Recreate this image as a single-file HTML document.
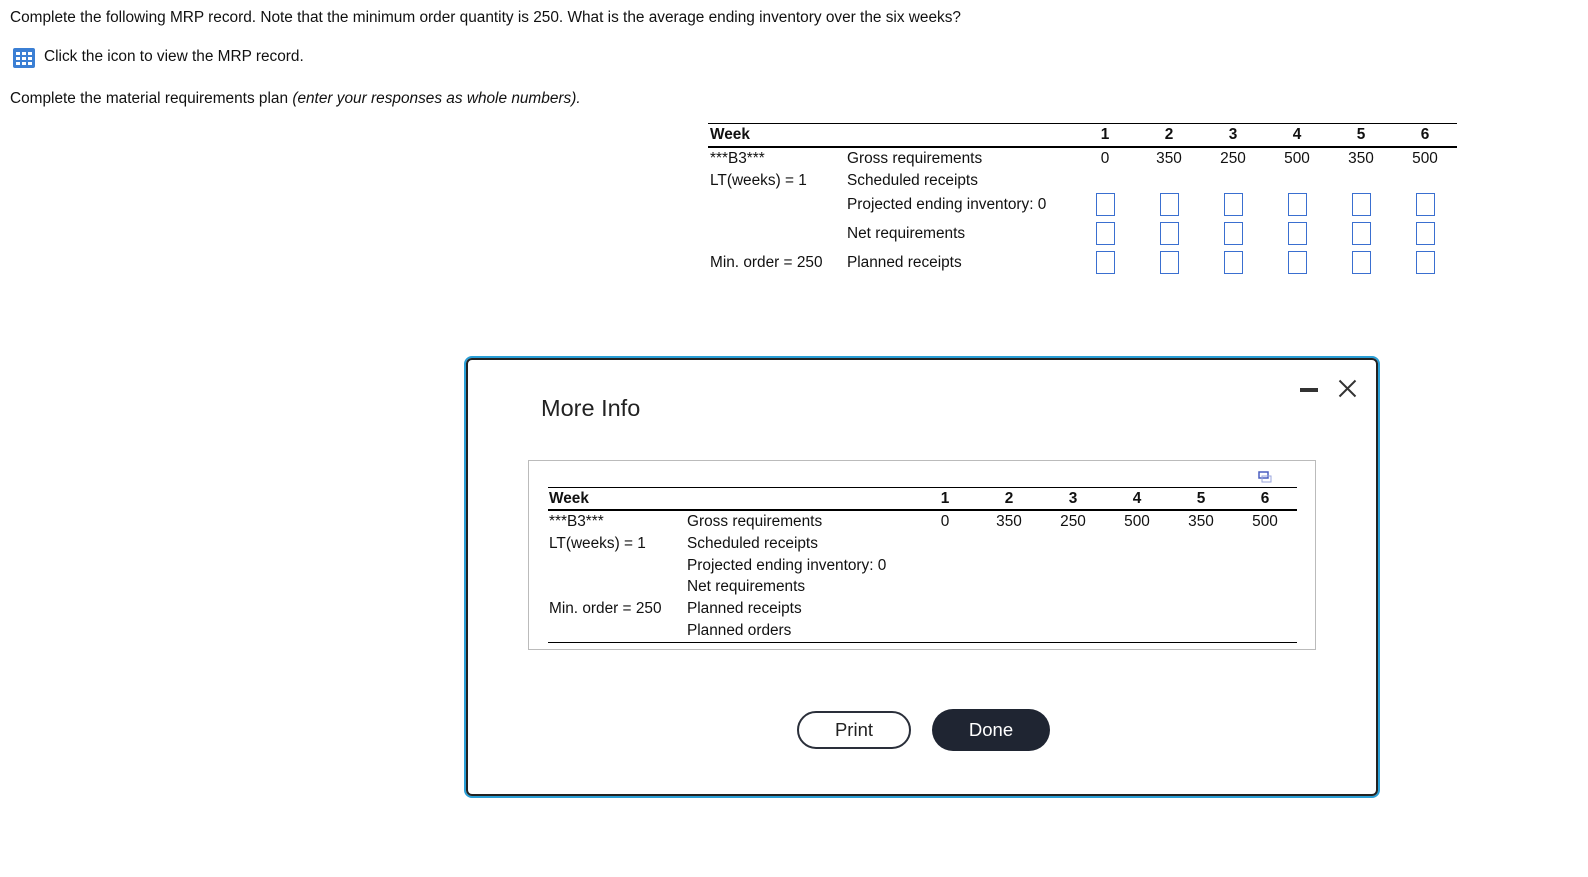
<!DOCTYPE html>
<html><head><style>
body{margin:0;width:1588px;height:877px;background:#fff;font-family:"Liberation Sans",Arial,sans-serif;color:#111;position:relative;overflow:hidden}
.a{position:absolute;white-space:nowrap;line-height:18px}
.t{font-size:15.4px}
.c{text-align:center;width:40px;margin-left:-20px}
.b{font-weight:bold}
.box{position:absolute;width:17px;height:21px;border:1.5px solid #3a6fd0}
.ln{position:absolute;background:#000}
</style></head><body>
<div class="a t" style="left:10px;top:9px">Complete the following MRP record. Note that the minimum order quantity is 250. What is the average ending inventory over the six weeks?</div>
<svg class="a" style="left:13px;top:48px" width="22" height="20" viewBox="0 0 22 20"><rect x="0" y="0" width="22" height="20" rx="2" fill="#3b7fd4"/><g fill="#fff"><rect x="3" y="4" width="4" height="3"/><rect x="9" y="4" width="4" height="3"/><rect x="15" y="4" width="4" height="3"/><rect x="3" y="9" width="4" height="3"/><rect x="9" y="9" width="4" height="3"/><rect x="15" y="9" width="4" height="3"/><rect x="3" y="14" width="4" height="3"/><rect x="9" y="14" width="4" height="3"/><rect x="15" y="14" width="4" height="3"/></g></svg>
<div class="a t" style="left:44px;top:48px">Click the icon to view the MRP record.</div>
<div class="a t" style="left:10px;top:90px">Complete the material requirements plan <i>(enter your responses as whole numbers).</i></div>

<div class="ln" style="left:708px;top:123px;width:749px;height:1px"></div>
<div class="ln" style="left:708px;top:146px;width:749px;height:2px"></div>
<div class="a t b" style="left:710px;top:126px">Week</div>
<div class="a t" style="left:710px;top:150px">***B3***</div>
<div class="a t" style="left:710px;top:172px">LT(weeks) = 1</div>
<div class="a t" style="left:710px;top:254px">Min. order = 250</div>
<div class="a t" style="left:847px;top:150px">Gross requirements</div>
<div class="a t" style="left:847px;top:172px">Scheduled receipts</div>
<div class="a t" style="left:847px;top:196px">Projected ending inventory: 0</div>
<div class="a t" style="left:847px;top:225px">Net requirements</div>
<div class="a t" style="left:847px;top:254px">Planned receipts</div>

<div class="a t b c" style="left:1105px;top:126px">1</div><div class="a t b c" style="left:1169px;top:126px">2</div><div class="a t b c" style="left:1233px;top:126px">3</div><div class="a t b c" style="left:1297px;top:126px">4</div><div class="a t b c" style="left:1361px;top:126px">5</div><div class="a t b c" style="left:1425px;top:126px">6</div>
<div class="a t c" style="left:1105px;top:150px">0</div><div class="a t c" style="left:1169px;top:150px">350</div><div class="a t c" style="left:1233px;top:150px">250</div><div class="a t c" style="left:1297px;top:150px">500</div><div class="a t c" style="left:1361px;top:150px">350</div><div class="a t c" style="left:1425px;top:150px">500</div>

<div class="box" style="left:1096px;top:193px"></div><div class="box" style="left:1160px;top:193px"></div><div class="box" style="left:1224px;top:193px"></div><div class="box" style="left:1288px;top:193px"></div><div class="box" style="left:1352px;top:193px"></div><div class="box" style="left:1416px;top:193px"></div>
<div class="box" style="left:1096px;top:222px"></div><div class="box" style="left:1160px;top:222px"></div><div class="box" style="left:1224px;top:222px"></div><div class="box" style="left:1288px;top:222px"></div><div class="box" style="left:1352px;top:222px"></div><div class="box" style="left:1416px;top:222px"></div>
<div class="box" style="left:1096px;top:251px"></div><div class="box" style="left:1160px;top:251px"></div><div class="box" style="left:1224px;top:251px"></div><div class="box" style="left:1288px;top:251px"></div><div class="box" style="left:1352px;top:251px"></div><div class="box" style="left:1416px;top:251px"></div>

<div style="position:absolute;left:464px;top:356px;width:912px;height:438px;border:2px solid #2a9fd6;border-radius:8px;"><div style="position:absolute;left:0;top:0;right:0;bottom:0;border:2px solid #222;border-radius:6px;background:#fff"></div></div>
<div class="a" style="left:541px;top:394px;font-size:23.5px;line-height:28px;color:#222">More Info</div>
<div class="a" style="left:1300px;top:388px;width:18px;height:4px;background:#333"></div>
<svg class="a" style="left:1338px;top:379px" width="19" height="19"><path d="M1.5 1.5L17.5 17.5M17.5 1.5L1.5 17.5" stroke="#333" stroke-width="2"/></svg>

<div style="position:absolute;left:528px;top:460px;width:786px;height:188px;border:1px solid #bbb"></div>
<svg class="a" style="left:1258px;top:471px" width="14" height="12"><rect x="1" y="1" width="9" height="6" fill="none" stroke="#4a5fc0" stroke-width="1.5"/><rect x="4" y="5" width="9" height="6" fill="none" stroke="#9aa6dd" stroke-width="1"/></svg>
<div class="ln" style="left:548px;top:487px;width:749px;height:1px"></div>
<div class="ln" style="left:548px;top:509px;width:749px;height:2px"></div>
<div class="ln" style="left:548px;top:642px;width:749px;height:1px"></div>
<div class="a t b" style="left:549px;top:490px">Week</div>
<div class="a t" style="left:549px;top:513px">***B3***</div>
<div class="a t" style="left:549px;top:535px">LT(weeks) = 1</div>
<div class="a t" style="left:549px;top:600px">Min. order = 250</div>
<div class="a t" style="left:687px;top:513px">Gross requirements</div>
<div class="a t" style="left:687px;top:535px">Scheduled receipts</div>
<div class="a t" style="left:687px;top:557px">Projected ending inventory: 0</div>
<div class="a t" style="left:687px;top:578px">Net requirements</div>
<div class="a t" style="left:687px;top:600px">Planned receipts</div>
<div class="a t" style="left:687px;top:622px">Planned orders</div>
<div class="a t b c" style="left:945px;top:490px">1</div><div class="a t b c" style="left:1009px;top:490px">2</div><div class="a t b c" style="left:1073px;top:490px">3</div><div class="a t b c" style="left:1137px;top:490px">4</div><div class="a t b c" style="left:1201px;top:490px">5</div><div class="a t b c" style="left:1265px;top:490px">6</div>
<div class="a t c" style="left:945px;top:513px">0</div><div class="a t c" style="left:1009px;top:513px">350</div><div class="a t c" style="left:1073px;top:513px">250</div><div class="a t c" style="left:1137px;top:513px">500</div><div class="a t c" style="left:1201px;top:513px">350</div><div class="a t c" style="left:1265px;top:513px">500</div>

<div style="position:absolute;left:797px;top:711px;width:110px;height:34px;border:2px solid #2a2f3a;border-radius:19px;text-align:center;line-height:34px;font-size:18.5px;color:#222">Print</div>
<div style="position:absolute;left:932px;top:709px;width:118px;height:42px;background:#1f2532;border-radius:21px;text-align:center;line-height:42px;font-size:18.5px;color:#fff">Done</div>
</body></html>
